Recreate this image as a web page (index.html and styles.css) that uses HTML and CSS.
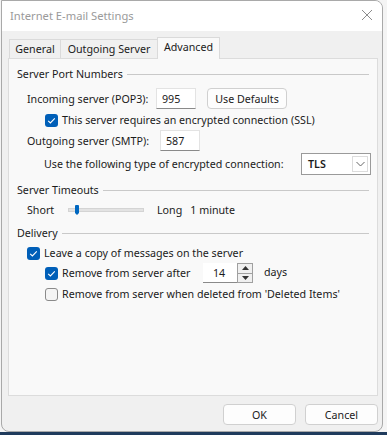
FILE: index.html
```html
<!DOCTYPE html>
<html>
<head>
<meta charset="utf-8">
<link rel="stylesheet" href="styles.css">
</head>
<body>
<div class="window">
  <div class="titlebar">
    <span class="title">Internet E-mail Settings</span>
    <svg class="close" width="12" height="12" viewBox="0 0 12 12"><path d="M1 1L11 11M11 1L1 11" stroke="#8c8c8c" stroke-width="1"/></svg>
  </div>
  <div class="client">
    <div class="tabs">
      <div class="tab t-general">General</div>
      <div class="tab t-out">Outgoing Server</div>
      <div class="tab active t-adv">Advanced</div>
    </div>
    <div class="panel">
      <div class="group g1"><span>Server Port Numbers</span><div class="rule"></div></div>
      <div class="row r-in">
        <span class="lbl w-in">Incoming server (POP3):</span>
        <div class="input w40">995</div>
        <div class="btn defaults">Use Defaults</div>
      </div>
      <div class="row r-ssl indent2">
        <span class="cb checked"><svg width="13" height="13" viewBox="0 0 13 13"><path d="M3.2 6.8L5.4 9L9.8 4.4" fill="none" stroke="#fff" stroke-width="1.1"/></svg></span>
        <span>This server requires an encrypted connection (SSL)</span>
      </div>
      <div class="row r-out">
        <span class="lbl w-out">Outgoing server (SMTP):</span>
        <div class="input w40">587</div>
      </div>
      <div class="row r-type">
        <span class="lbl w-type">Use the following type of encrypted connection:</span>
        <div class="select"><span class="sel-text">TLS</span><span class="sel-btn"><svg width="9" height="6" viewBox="0 0 9 6"><path d="M0.5 1L4.5 5L8.5 1" fill="none" stroke="#666" stroke-width="1"/></svg></span></div>
      </div>
      <div class="group g2"><span>Server Timeouts</span><div class="rule"></div></div>
      <div class="row r-slider">
        <span class="lbl w-short">Short</span>
        <div class="slider"><div class="track"></div><div class="thumb"></div></div>
        <span class="long">Long</span>
        <span>1 minute</span>
      </div>
      <div class="group g3"><span>Delivery</span><div class="rule"></div></div>
      <div class="row r-leave indent1">
        <span class="cb checked"><svg width="13" height="13" viewBox="0 0 13 13"><path d="M3.2 6.8L5.4 9L9.8 4.4" fill="none" stroke="#fff" stroke-width="1.1"/></svg></span>
        <span>Leave a copy of messages on the server</span>
      </div>
      <div class="row r-after indent2">
        <span class="cb checked"><svg width="13" height="13" viewBox="0 0 13 13"><path d="M3.2 6.8L5.4 9L9.8 4.4" fill="none" stroke="#fff" stroke-width="1.1"/></svg></span>
        <span class="lbl w-after">Remove from server after</span>
        <div class="spinner">
          <div class="spin-text">14</div>
          <div class="spin-btns">
            <span class="sb"><svg width="7" height="4" viewBox="0 0 7 4"><path d="M0 4L3.5 0L7 4Z" fill="#333"/></svg></span>
            <span class="sb"><svg width="7" height="4" viewBox="0 0 7 4"><path d="M0 0L3.5 4L7 0Z" fill="#333"/></svg></span>
          </div>
        </div>
        <span class="days">days</span>
      </div>
      <div class="row r-deleted indent2">
        <span class="cb"></span>
        <span>Remove from server when deleted from 'Deleted Items'</span>
      </div>
    </div>
    <div class="footer">
      <div class="btn dlg">OK</div>
      <div class="btn dlg">Cancel</div>
    </div>
  </div>
</div>
</body>
</html>
```
FILE: styles.css
```css
html, body {
  margin: 0;
  padding: 0;
}
body {
  width: 387px;
  height: 435px;
  background: linear-gradient(to bottom, #f4f4f4 0, #f4f4f4 432px, #1f3b5c 432px);
  font-family: "Noto Sans", "Open Sans", sans-serif;
  font-size: 10.7px;
  color: #1b1b1b;
  overflow: hidden;
}
.window {
  margin-left: 1px;
  width: 380px;
  height: 430px;
  border: 1px solid #a9a9a9;
  border-radius: 0 8px 8px 8px;
  background: #f0f0f0;
  overflow: hidden;
  display: flex;
  flex-direction: column;
}
.titlebar {
  height: 30px;
  background: #ffffff;
  display: flex;
  align-items: center;
  padding-left: 8px;
  padding-right: 9px;
  flex: none;
}
.title {
  color: #9a9a9a;
  font-size: 11.2px;
  flex: 1;
  margin-top: -2px;
}
.close {
  margin-top: -2px;
}
.client {
  flex: 1;
  padding: 7px 4px 0 6px;
  display: flex;
  flex-direction: column;
}
.tabs {
  display: flex;
  align-items: flex-end;
  height: 20px;
  padding-left: 1px;
  position: relative;
  z-index: 1;
}
.tab {
  height: 17px;
  border: 1px solid #dadada;
  border-bottom: none;
  background: #f0f0f0;
  display: flex;
  align-items: center;
  justify-content: center;
  line-height: 1;
  margin-right: -1px;
  padding-top: 1px;
}
.t-general { width: 50px; }
.t-out { width: 96px; }
.tab.active {
  width: 63px;
  background: #f9f9f9;
  margin-bottom: -1px;
  padding-top: 0;
  padding-bottom: 2px;
  box-sizing: border-box;
  height: 22px;
}
.panel {
  height: 336px;
  border: 1px solid #dcdcdc;
  background: #f9f9f9;
  padding: 0 0 0 8px;
  display: flex;
  flex-direction: column;
}
.group {
  display: flex;
  align-items: center;
  height: 16px;
  padding-right: 8px;
}
.group .rule {
  flex: 1;
  height: 1px;
  background: #c9c9c9;
  margin-left: 4px;
  margin-top: 1px;
}
.g1 { margin-top: 7px; }
.g2 { margin-top: 7px; }
.g3 { margin-top: 7px; }
.row {
  display: flex;
  align-items: center;
  white-space: nowrap;
}
.lbl { flex: none; }
.r-in { height: 21px; margin-top: 6px; padding-left: 10px; }
.w-in { width: 129px; }
.w-out { width: 133px; }
.r-ssl { height: 16px; margin-top: 3px; }
.r-out { height: 21px; margin-top: 2px; padding-left: 10px; }
.r-type { height: 22px; margin-top: 2px; padding-left: 27px; }
.w-type { width: 257px; }
.indent1 { padding-left: 10px; }
.indent2 { padding-left: 28px; }
.input {
  box-sizing: border-box;
  height: 21px;
  background: #ffffff;
  border: 1px solid #e3e3e3;
  border-bottom-color: #8a8a8a;
  padding-left: 5px;
  display: flex;
  align-items: center;
}
.w40 { width: 40px; }
.btn {
  box-sizing: border-box;
  background: #fdfdfd;
  border: 1px solid #d0d0d0;
  border-radius: 4px;
  display: flex;
  align-items: center;
  justify-content: center;
}
.defaults {
  width: 80px;
  height: 21px;
  margin-left: 11px;
}
.cb {
  box-sizing: border-box;
  width: 13px;
  height: 13px;
  border-radius: 3px;
  border: 1px solid #8a8a8a;
  background: #f4f4f4;
  margin-right: 4px;
  flex: none;
  display: flex;
}
.cb.checked {
  border: none;
  background: #005fb8;
}
.select {
  box-sizing: border-box;
  width: 70px;
  height: 22px;
  border: 1px solid #9a9a9a;
  background: #ffffff;
  display: flex;
  align-items: center;
  padding: 2px;
}
.sel-text {
  flex: 1;
  padding-left: 4px;
  font-weight: 600;
}
.sel-btn {
  box-sizing: border-box;
  width: 16px;
  height: 16px;
  border: 1px solid #dcdcdc;
  display: flex;
  align-items: center;
  justify-content: center;
}
.r-slider { height: 16px; margin-top: 4px; padding-left: 10px; }
.w-short { width: 41px; }
.slider {
  position: relative;
  width: 75px;
  height: 12px;
}
.track {
  position: absolute;
  left: 0;
  top: 4px;
  width: 74px;
  background: #e3e3e3;
  border: 1px solid #d4d4d4;
  box-sizing: content-box;
  height: 2px;
}
.thumb {
  position: absolute;
  left: 7px;
  top: 1px;
  width: 4px;
  height: 8px;
  background: #0067c0;
  border-radius: 1px 1px 0 0;
}
.thumb::after {
  content: "";
  position: absolute;
  left: 0;
  top: 8px;
  border-left: 2px solid transparent;
  border-right: 2px solid transparent;
  border-top: 2px solid #0067c0;
}
.long { margin-left: 14px; margin-right: 8px; }
.r-leave { height: 16px; margin-top: 4px; }
.r-after { height: 20px; margin-top: 2px; }
.w-after { width: 141px; }
.spinner {
  display: flex;
  height: 20px;
  width: 50px;
  box-sizing: border-box;
}
.spin-text {
  box-sizing: border-box;
  width: 34px;
  height: 20px;
  background: #fff;
  border-bottom: 1px solid #8a8a8a;
  padding-left: 10px;
  display: flex;
  align-items: center;
}
.spin-btns {
  box-sizing: border-box;
  width: 16px;
  height: 20px;
  border: 1px solid #a0a0a0;
  background: #f0f0f0;
  display: flex;
  flex-direction: column;
}
.sb {
  flex: 1;
  display: flex;
  align-items: center;
  justify-content: center;
}
.sb + .sb { border-top: 1px solid #a0a0a0; }
.days { margin-left: 11px; margin-top: -3px; }
.r-deleted { height: 16px; margin-top: 3px; }
.footer {
  display: flex;
  justify-content: flex-end;
  gap: 9px;
  padding-top: 8px;
  padding-right: 0;
}
.dlg {
  width: 73px;
  height: 21px;
}
```
